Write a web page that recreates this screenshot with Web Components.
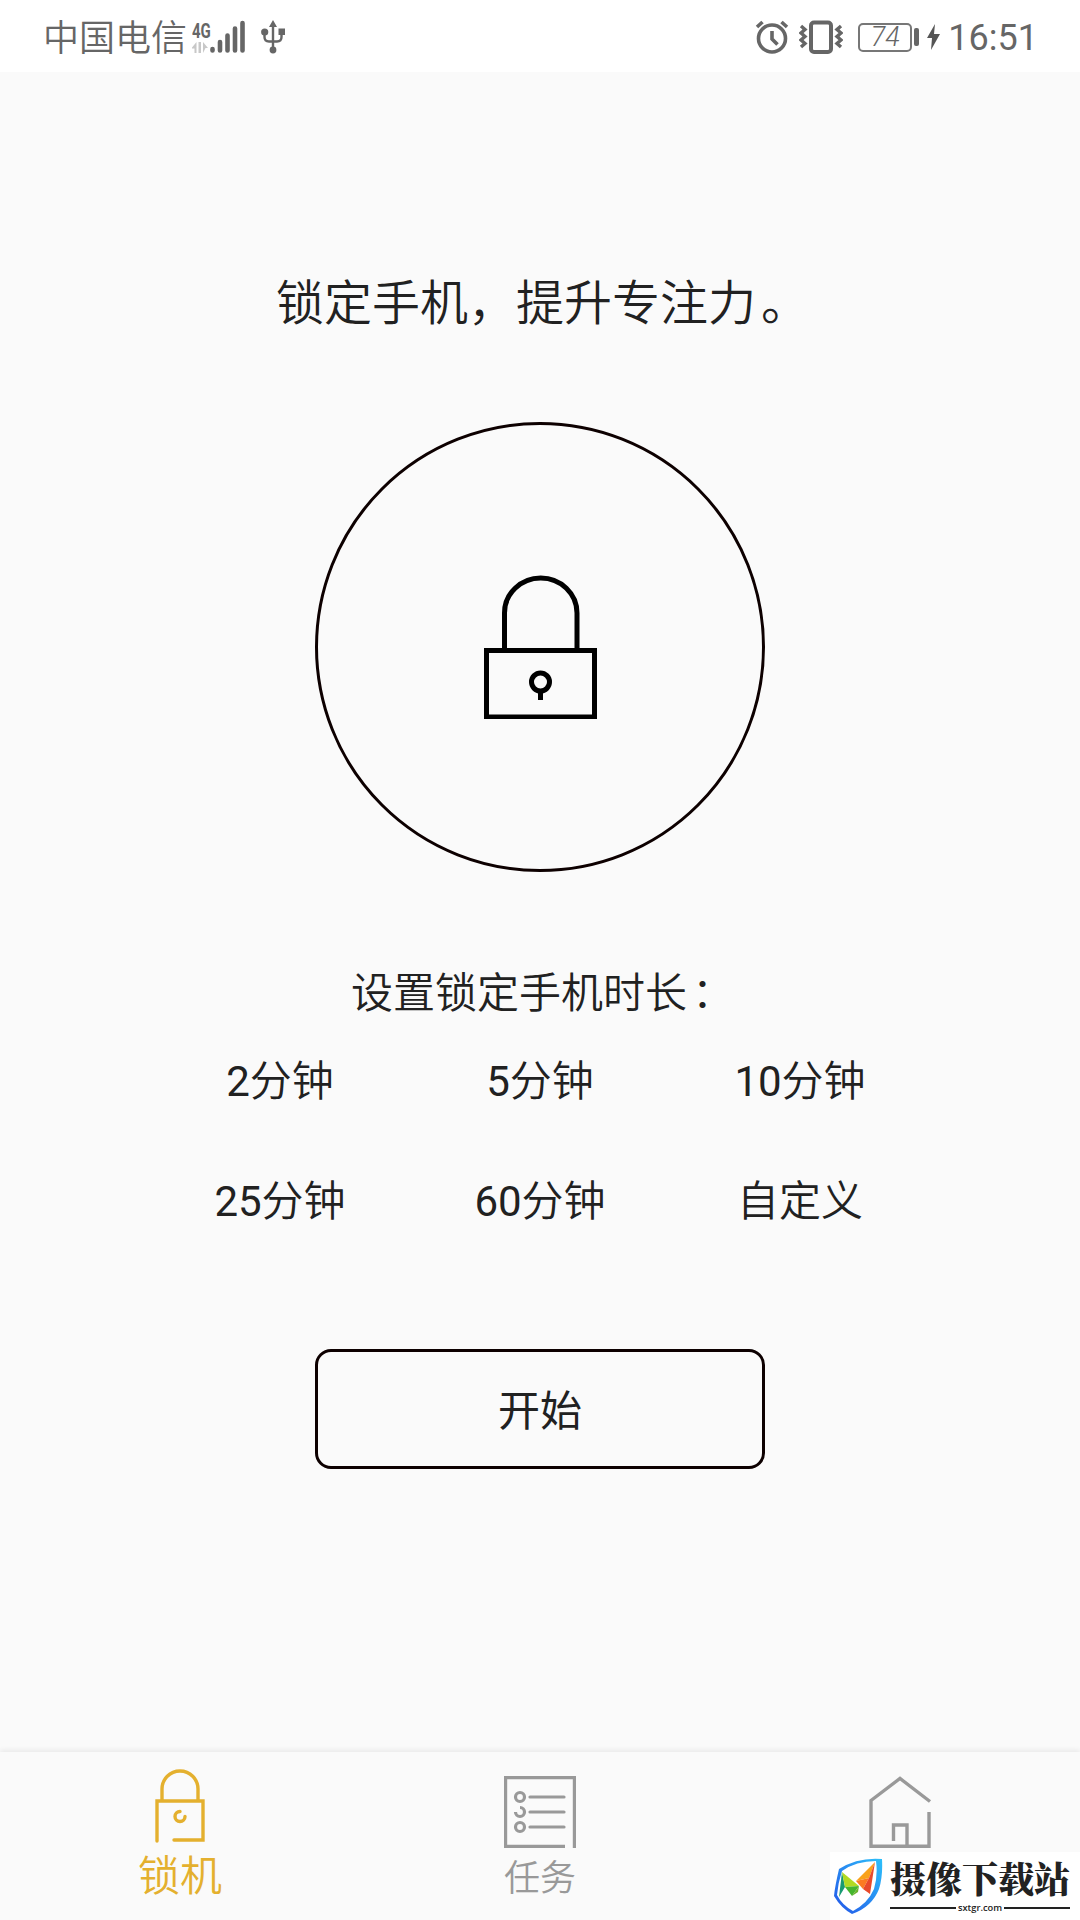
<!DOCTYPE html>
<html lang="zh-CN">
<head>
<meta charset="utf-8">
<title>锁机</title>
<style>
body {
    margin: 0;
    background: #fafafa;
    font-family: Roboto, "Noto Sans CJK SC", sans-serif;
    color: #212121;
}
</style>
</head>
<body>
<lock-app></lock-app>

<script>
const define = (name, html, setup) => {
    const template = document.createElement('template');
    template.innerHTML = html;
    customElements.define(name, class extends HTMLElement {
        constructor() {
            super();
            this.attachShadow({mode: 'open'})
                .appendChild(template.content.cloneNode(true));
        }

        connectedCallback() {
            if (setup) {
                setup(this, this.shadowRoot);
            }
        }
    });
};

const icons = {
    lock: `<svg width="72" height="74" viewBox="0 0 72 74" fill="none" stroke="currentColor" stroke-width="3.4">
        <path d="M18 31V20a18 18 0 0 1 36 0v11"/>
        <path d="M13 72V32H59V71H30" stroke-linecap="round"/>
        <path d="M36 42.500a5 5 0 1 0 5 5" stroke-linecap="round"/>
    </svg>`,
    list: `<svg width="72" height="72" viewBox="0 0 72 72" fill="none" stroke="currentColor" stroke-width="3.2">
        <path d="M61 70.400H1.600V1.600H70.400V72"/>
        <circle cx="16" cy="21" r="4.500"/>
        <path d="M16 31.500a4.500 4.500 0 1 1-4.500 4.500"/>
        <circle cx="16" cy="51" r="4.500"/>
        <path d="M26 21H60M26 36H60M26 51H60" stroke-linecap="round"/>
    </svg>`,
    home: `<svg width="72" height="72" viewBox="0 0 72 72" fill="none" stroke="currentColor" stroke-width="3.400">
        <path d="M66 25.500L36 2.500L7 24.500V70.300H65V36"/>
        <path d="M29.500 65V49H43V70"/>
    </svg>`
};

define('status-bar', `
<style>
:host {
    display: flex;
    align-items: center;
    box-sizing: border-box;
    height: 72px;
    padding: 2px 42px 0 43px;
    background: #fff;
    color: #666;
}
.carrier {
    padding-top: 4px;
    font-size: 36px;
    font-weight: 350;
    line-height: 54px;
}
.net {
    display: flex;
    flex-direction: column;
    width: 18px;
    margin-left: 5px;
    font: bold 20px/20px Roboto, sans-serif;
}
.net span {
    transform: scaleX(.75);
    transform-origin: left;
}
.clock {
    padding-top: 2px;
    margin-left: 8px;
    font-size: 36px;
}
.spacer { flex: 1; }
svg { display: block; }
.battery {
    display: flex;
    align-items: center;
    justify-content: center;
    box-sizing: border-box;
    width: 54px;
    height: 29px;
    margin-left: 15px;
    border: 2px solid #777;
    border-radius: 5px;
    font-size: 27px;
    font-style: italic;
    font-weight: 350;
}
.cap {
    width: 5px;
    height: 18px;
    margin-left: 2px;
    border-radius: 2px;
    background: #666;
}
</style>
<span class="carrier">中国电信</span>
<span class="net"><span>4G</span>
    <svg width="16" height="13" viewBox="0 0 16 13" fill="#c8c8c8"><path d="M0 6.500L4.500 1V12H2.500V7.500H0zM11 12V1L16 7H13.500z"/><path d="M6.500 1h2.500v11H6.500z"/></svg>
</span>
<svg width="35" height="34" viewBox="0 0 35 34" stroke="#666" stroke-width="4.600" stroke-linecap="round"><path d="M2.500 30.500V29M10 30.500V22M17.500 30.500V15.500M25 30.500V8.500M32.500 30.500V3"/></svg>
<svg style="margin-left:16px" width="24" height="36" viewBox="0 0 24 36" fill="#666">
    <path d="M12 30V5M3.500 14V18Q3.500 22.500 8 22.500H16Q20.500 22.500 20.500 18V14" fill="none" stroke="#666" stroke-width="2.400"/>
    <path d="M12 1L16 8H8zM17.500 9.500h6.500v6.500h-6.500z"/><circle cx="3.700" cy="13" r="3.600"/><circle cx="12" cy="31" r="3.400"/>
</svg>
<span class="spacer"></span>
<svg width="34" height="34" viewBox="0 0 34 34" fill="none" stroke="#666" stroke-width="3.600">
    <circle cx="17" cy="18.500" r="13.500"/>
    <path d="M17 11V19L22.500 24.500M2 7L7.500 2M26.500 2L32 7"/>
</svg>
<svg style="margin-left:10px" width="44" height="34" viewBox="0 0 44 34" fill="none" stroke="#666" stroke-width="3.400">
    <rect x="12" y="2.500" width="20" height="29.500" rx="3" stroke-width="4"/>
    <path d="M2 6L6 9.500L2 13L6 16.500L2 20L6 23.500L2 27M42 6L38 9.500L42 13L38 16.500L42 20L38 23.500L42 27"/>
</svg>
<span class="battery">74</span><span class="cap"></span>
<svg style="margin-left:8px" width="13" height="26" viewBox="0 0 13 26" fill="#555"><path d="M8 0L0 14H5L4 26L13 10H7z"/></svg>
<span class="clock">16:51</span>
`);

define('lock-dial', `
<style>
:host {
    display: flex;
    align-items: center;
    justify-content: center;
    box-sizing: border-box;
    width: 450px;
    height: 450px;
    border: 3px solid #0d0000;
    border-radius: 50%;
}
</style>
<svg width="114" height="144" viewBox="0 0 114 144" fill="none" stroke="#000" stroke-width="5">
    <path d="M21.500 73V38a36.250 35 0 0 1 72.500 0V73"/>
    <rect x="3.500" y="75.500" width="108" height="66.500"/>
    <circle cx="57.500" cy="107" r="9"/>
    <path d="M57.500 115V125"/>
</svg>
`);

define('duration-option', `
<style>
:host {
    display: flex;
    align-items: center;
    justify-content: center;
    height: 120px;
    font-size: 42px;
    line-height: 60px;
}
.unit { font-weight: 350; }
</style>
<slot name="count"></slot><span class="unit"><slot></slot></span>
`);

define('duration-picker', `
<style>
:host {
    display: flex;
    flex-direction: column;
    align-items: center;
}
.label {
    height: 58px;
    font-size: 42px;
    font-weight: 350;
    line-height: 60px;
    white-space: nowrap;
}
.grid {
    display: grid;
    grid-template-columns: repeat(3, 260px);
}
</style>
<div class="label"><slot name="label"></slot></div>
<div class="grid"><slot></slot></div>
`);

define('outline-button', `
<style>
:host {
    display: block;
}
button {
    display: block;
    box-sizing: border-box;
    width: 450px;
    height: 120px;
    padding: 5px 0 0;
    border: 3px solid #0d0000;
    border-radius: 16px;
    background: none;
    color: inherit;
    font: 400 42px/60px Roboto, "Noto Sans CJK SC", sans-serif;
}
</style>
<button><slot></slot></button>
`);

define('nav-tab', `
<style>
:host {
    display: flex;
    flex: 1;
    flex-direction: column;
    align-items: center;
    box-sizing: border-box;
    padding-top: 24px;
    color: #999;
    font-size: 36px;
    font-weight: 350;
    line-height: 54px;
}
:host([active]) {
    padding-top: 17px;
    color: #e4b02e;
    font-size: 42px;
    line-height: 60px;
}
.icon { height: 76px; }
:host([active]) .icon { height: 78px; }
svg { display: block; }
</style>
<div class="icon"></div>
<slot></slot>
`, (host, root) => {
    root.querySelector('.icon').innerHTML = icons[host.getAttribute('icon')];
});

define('bottom-nav', `
<style>
:host {
    display: flex;
    height: 168px;
    background: #fafafa;
    box-shadow: 0 -2px 5px rgba(0, 0, 0, .07);
}
</style>
<slot></slot>
`);

define('site-badge', `
<style>
:host {
    display: flex;
    box-sizing: border-box;
    width: 250px;
    height: 68px;
    padding: 6px 11px 0 4px;
    background: #fff;
    color: #222;
}
svg { flex: none; }
.words {
    flex: 1;
    margin-left: 7px;
}
.name {
    height: 44px;
    font: 900 36px/40px "Noto Serif CJK SC", "Noto Sans CJK SC", serif;
    white-space: nowrap;
}
.site {
    display: flex;
    align-items: center;
    gap: 2px;
    font: 600 9.300px/11px "Open Sans", sans-serif;
}
.site::before, .site::after {
    content: "";
    flex: 1;
    height: 2px;
    background: #222;
}
</style>
<svg width="49" height="56" viewBox="0 0 49 56">
    <defs><linearGradient id="edge" x1="1" y1="0" x2="0" y2="1"><stop stop-color="#2dc0fa"/><stop offset="1" stop-color="#2354e8"/></linearGradient></defs>
    <path d="M48 1Q24 -1 5 11Q1 28 0 38Q7 50 18 56Q38 49 45 31Q49 18 48 1zM42 3Q44 18 40 31Q34 45 19 53Q8 47 3 37Q4 25 8 13Q22 3 42 3z" fill="url(#edge)" fill-rule="evenodd"/>
    <path d="M8 14L5 39L11 29z" fill="#189a72"/>
    <path d="M8 14L25 28L11 29z" fill="#b2d922"/>
    <path d="M11 29L25 28L18 38z" fill="#45b52d"/>
    <path d="M25 28L24 34L18 38z" fill="#6ab42b"/>
    <path d="M41 4L35 20L22 23z" fill="#f9a21b"/>
    <path d="M22 23L35 20L29 31z" fill="#fb7a22"/>
    <path d="M41 4L36 36L29 31L35 20z" fill="#e8492b"/>
</svg>
<div class="words">
    <div class="name">摄像下载站</div>
    <div class="site">sxtgr.com</div>
</div>
`);

define('lock-app', `
<style>
:host {
    position: relative;
    display: flex;
    flex-direction: column;
    height: 1920px;
    overflow: hidden;
}
main {
    display: flex;
    flex: 1;
    flex-direction: column;
    align-items: center;
}
h1 {
    margin: 196px 0 82px;
    font-size: 48px;
    font-weight: 350;
    line-height: 72px;
    white-space: nowrap;
}
/* punctuation sits a little further right in its cell */
.mark { margin: 0 -5px 0 5px; }
duration-picker { margin-top: 92px; }
outline-button { margin-top: 87px; }
site-badge {
    position: absolute;
    right: 0;
    bottom: 0;
}
</style>
<status-bar></status-bar>
<main>
    <h1>锁定手机，提升专注力<span class="mark">。</span></h1>
    <lock-dial></lock-dial>
    <duration-picker>
        <span slot="label">设置锁定手机时长<span class="mark">：</span></span>
        <duration-option><span slot="count">2</span>分钟</duration-option>
        <duration-option><span slot="count">5</span>分钟</duration-option>
        <duration-option><span slot="count">10</span>分钟</duration-option>
        <duration-option><span slot="count">25</span>分钟</duration-option>
        <duration-option><span slot="count">60</span>分钟</duration-option>
        <duration-option>自定义</duration-option>
    </duration-picker>
    <outline-button>开始</outline-button>
</main>
<bottom-nav>
    <nav-tab icon="lock" active>锁机</nav-tab>
    <nav-tab icon="list">任务</nav-tab>
    <nav-tab icon="home"></nav-tab>
</bottom-nav>
<site-badge></site-badge>
`);
</script>
</body>
</html>
